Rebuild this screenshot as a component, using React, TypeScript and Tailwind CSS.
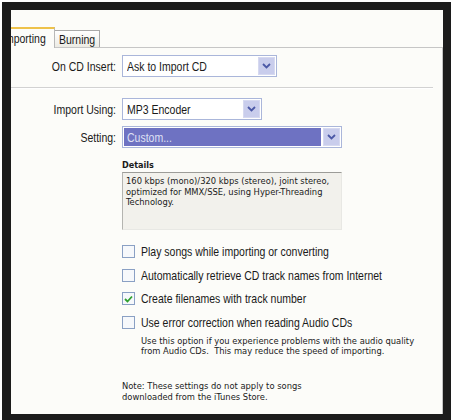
import React from "react";

const sans = { fontFamily: '"Liberation Sans", Arial, sans-serif' };
const small = { fontFamily: '"DejaVu Sans Condensed", "Liberation Sans", sans-serif' };

function T({ children, className = "" }: { children: React.ReactNode; className?: string }) {
  return (
    <span className={`inline-block scale-y-[1.2] whitespace-nowrap text-[10.5px] leading-[13px] ${className}`} style={sans}>
      {children}
    </span>
  );
}

function Chevron() {
  return (
    <svg width="9" height="6" viewBox="0 0 9 6">
      <path d="M1 1 L4.5 4.5 L8 1" fill="none" stroke="#4b58a6" strokeWidth="1.8" />
    </svg>
  );
}

function Select({ w, text, selected }: { w: string; text: string; selected?: boolean }) {
  return (
    <div className={`flex h-[22px] items-stretch border border-[#aab6da] bg-white p-px leading-[13px] ${w}`}>
      <div className={`flex flex-1 items-center pl-[3px] ${selected ? "mr-[2px] bg-[#6e72c2] text-[#dfe0f4]" : "text-[#1a1a1a]"}`}>
        <T>{text}</T>
      </div>
      <div className="flex w-[17px] items-center justify-center border border-[#d6d9f0] bg-[#c9cdec]">
        <Chevron />
      </div>
    </div>
  );
}

function Check({ checked, label }: { checked?: boolean; label: string }) {
  return (
    <div className="flex h-[13px] items-center leading-[13px]">
      <div className="flex h-[13px] w-[13px] shrink-0 items-center justify-center border border-[#8aa0c4] bg-[#f6f8fb]">
        {checked && (
          <svg width="9" height="8" viewBox="0 0 9 8">
            <path d="M1 4 L3.5 6.5 L8 1.5" fill="none" stroke="#2fa02f" strokeWidth="1.8" />
          </svg>
        )}
      </div>
      <T className="ml-[6px] text-[#1a1a1a]">{label}</T>
    </div>
  );
}

function Row({ label, children, mt }: { label: string; children: React.ReactNode; mt: string }) {
  return (
    <div className={`flex items-center leading-[13px] ${mt}`}>
      <div className="flex w-[106px] justify-end pr-px text-[#1a1a1a]">
        <T>{label}</T>
      </div>
      <div className="ml-[5px]">{children}</div>
    </div>
  );
}

export default function App() {
  return (
    <div className="h-[420px] w-[451px] bg-white pl-[2px] pt-[2px]">
      <div className="h-[418px] w-[449px] bg-[#1c1c1c] pb-[6px] pl-[9px] pr-[8px] pt-[8px]">
        <div className="flex h-[404px] w-[432px] flex-col bg-[#fcfcf9] leading-[13px]">
          {/* tabs */}
          <div className="flex h-[38px] shrink-0 items-end border-b border-[#c6c6c6]">
            <div className="-mb-px flex h-[21px] w-[44px] items-center overflow-hidden border-r border-t-2 border-r-[#b8b8b8] border-t-[#eec24a] bg-[#fcfcf9] pb-[3px]">
              <div className="ml-[-9px] text-[#1a1a1a]">
                <T>Importing</T>
              </div>
            </div>
            <div className="flex h-[17px] items-center border border-b-0 border-l-0 border-[#a9a9a9] bg-gradient-to-b from-white to-[#ecebe4] px-[4px] text-[#1a1a1a]">
              <T>Burning</T>
            </div>
          </div>
          {/* pane */}
          <div className="flex flex-1 flex-col border-r border-[#c4c4c4]">
            <Row label="On CD Insert:" mt="mt-[7px]">
              <Select w="w-[155px]" text="Ask to Import CD" />
            </Row>
            <div className="mr-[9px] mt-[10px] h-[2px] border-b border-t border-b-white border-t-[#d2d2d2]" />
            <Row label="Import Using:" mt="mt-[9px]">
              <Select w="w-[140px]" text="MP3 Encoder" />
            </Row>
            <Row label="Setting:" mt="mt-[6px]">
              <Select w="w-[220px]" text="Custom..." selected />
            </Row>
            <div className="ml-[111px] mt-[12px] w-[220px]">
              <div className="text-[9px] font-bold leading-[11px] text-[#1a1a1a]" style={small}>
                Details
              </div>
              <div
                className="mt-[1px] h-[58px] border border-b-[#e8e8e4] border-l-[#b4b4b0] border-r-[#e8e8e4] border-t-[#9c9c98] bg-[#f2f1ec] px-[3px] pt-[3px] text-[9.3px] leading-[10.5px] text-[#1a1a1a]"
                style={small}
              >
                160 kbps (mono)/320 kbps (stereo), joint stereo, optimized for MMX/SSE, using Hyper-Threading Technology.
              </div>
            </div>
            <div className="ml-[111px] mt-[15px] flex flex-col gap-[10.7px]">
              <Check label="Play songs while importing or converting" />
              <Check label="Automatically retrieve CD track names from Internet" />
              <Check checked label="Create filenames with track number" />
              <Check label="Use error correction when reading Audio CDs" />
            </div>
            <div className="ml-[130px] mt-[7px] text-[9.3px] leading-[10px] text-[#1a1a1a]" style={small}>
              <div>Use this option if you experience problems with the audio quality</div>
              <div>from Audio CDs.&nbsp; This may reduce the speed of importing.</div>
            </div>
            <div className="ml-[111px] mt-[24px] text-[9.3px] leading-[11px] text-[#1a1a1a]" style={small}>
              <div>Note: These settings do not apply to songs</div>
              <div>downloaded from the iTunes Store.</div>
            </div>
          </div>
        </div>
      </div>
    </div>
  );
}
